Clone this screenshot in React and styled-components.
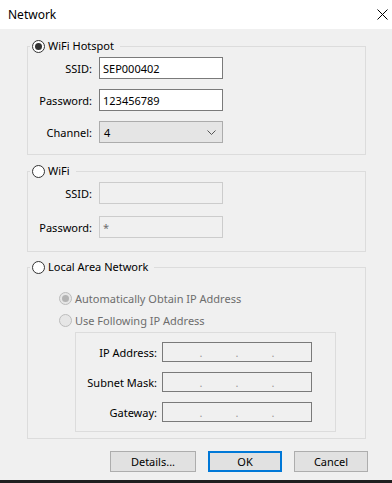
import styled, { createGlobalStyle } from "styled-components";

const GlobalStyle = createGlobalStyle`
  html, body {
    margin: 0;
    padding: 0;
    background: #f0f0f0;
  }
  body {
    font-family: "Noto Sans", "Liberation Sans", sans-serif;
    font-size: 11px;
    color: #000;
  }
`;

export default function App() {
  return (
    <Window>
      <GlobalStyle />
      <TitleBar>
        <span>Network</span>
        <svg width="11" height="11" viewBox="0 0 11 11">
          <path d="M0.5 0.5 L10.5 10.5 M10.5 0.5 L0.5 10.5" stroke="#000" strokeWidth="1" />
        </svg>
      </TitleBar>

      <Body>
        <Group $after={8}>
          <Legend>
            <Radio $checked />
            WiFi Hotspot
          </Legend>
          <Form $rowGap={10} $pad="3px 0 11px 8px">
            <Label>SSID:</Label>
            <TextBox readOnly value="SEP000402" />
            <Label>Password:</Label>
            <TextBox readOnly value="123456789" />
            <Label>Channel:</Label>
            <Combo>
              <span>4</span>
              <svg width="9" height="5" viewBox="0 0 9 5">
                <path d="M0.5 0.5 L4.5 4.5 L8.5 0.5" fill="none" stroke="#555" strokeWidth="1" />
              </svg>
            </Combo>
          </Form>
        </Group>

        <Group $after={7}>
          <Legend>
            <Radio />
            WiFi
          </Legend>
          <Form $rowGap={12} $pad="3px 0 13px 8px">
            <Label>SSID:</Label>
            <TextBox readOnly disabled value="" />
            <Label>Password:</Label>
            <TextBox readOnly disabled value="*" />
          </Form>
        </Group>

        <Group $after={12}>
          <Legend>
            <Radio />
            Local Area Network
          </Legend>
          <LanBody>
            <Option>
              <Radio $checked $disabled />
              Automatically Obtain IP Address
            </Option>
            <Option>
              <Radio $disabled />
              Use Following IP Address
            </Option>
            <IpBox>
              <Label>IP Address:</Label>
              <IpField />
              <Label>Subnet Mask:</Label>
              <IpField />
              <Label>Gateway:</Label>
              <IpField />
            </IpBox>
          </LanBody>
        </Group>

        <Buttons>
          <Button $w={86}>Details...</Button>
          <Button $w={74} $default>OK</Button>
          <Button $w={74}>Cancel</Button>
        </Buttons>
      </Body>
    </Window>
  );
}

function IpField() {
  return (
    <IpInput>
      <Octet />
      <Dot>.</Dot>
      <Octet />
      <Dot>.</Dot>
      <Octet />
      <Dot>.</Dot>
      <Octet />
    </IpInput>
  );
}

const Window = styled.div`
  width: 392px;
  height: 483px;
  box-sizing: border-box;
  display: flex;
  flex-direction: column;
  background: #f0f0f0;
  border-bottom: 3px solid #1f1f1f;
  overflow: hidden;
`;

const TitleBar = styled.div`
  height: 29px;
  flex-shrink: 0;
  background: #fff;
  display: flex;
  align-items: center;
  justify-content: space-between;
  padding: 0 4px 0 8px;
  box-sizing: border-box;
  font-size: 12px;
`;

const Body = styled.div`
  padding: 9px 26px 0 27px;
  display: flex;
  flex-direction: column;
`;

const Group = styled.fieldset`
  margin: 0 0 ${(p) => p.$after}px;
  padding: 0;
  min-width: 0;
  border: 1px solid #dcdcdc;
`;

const Legend = styled.legend`
  display: flex;
  align-items: center;
  height: 16px;
  line-height: 16px;
  margin-left: 2px;
  padding: 0 6px 0 2px;
`;

const Radio = styled.span`
  width: 13px;
  height: 13px;
  box-sizing: border-box;
  border-radius: 50%;
  border: 1px solid ${(p) => (p.$disabled ? "#bcbcbc" : "#333")};
  background: ${(p) => (p.$disabled ? "#e6e6e6" : "#fff")};
  margin-right: 3px;
  display: flex;
  align-items: center;
  justify-content: center;
  flex-shrink: 0;

  &::after {
    content: "";
    display: ${(p) => (p.$checked ? "block" : "none")};
    width: 7px;
    height: 7px;
    border-radius: 50%;
    background: ${(p) => (p.$disabled ? "#b4b4b4" : "#333")};
  }
`;

const Form = styled.div`
  display: grid;
  grid-template-columns: 56px 124px;
  column-gap: 7px;
  row-gap: ${(p) => p.$rowGap}px;
  align-items: center;
  padding: ${(p) => p.$pad};
`;

const Label = styled.span`
  text-align: right;
  white-space: nowrap;
`;

const TextBox = styled.input`
  height: 22px;
  box-sizing: border-box;
  margin: 0;
  padding: 0 3px;
  font: inherit;
  color: #000;
  background: #fff;
  border: 1px solid #7a7a7a;
  outline: none;

  &:disabled {
    background: #f0f0f0;
    border-color: #cccccc;
    color: #6d6d6d;
  }
`;

const Combo = styled.div`
  height: 22px;
  box-sizing: border-box;
  display: flex;
  align-items: center;
  justify-content: space-between;
  padding: 0 6px 0 4px;
  background: #e5e5e5;
  border: 1px solid #acacac;
`;

const LanBody = styled.div`
  display: flex;
  flex-direction: column;
  align-items: flex-start;
  padding: 15px 0 6px 31px;
`;

const Option = styled.div`
  display: flex;
  align-items: center;
  height: 16px;
  color: #6d6d6d;
  margin-bottom: 6px;
`;

const IpBox = styled.div`
  margin: -2px 0 0 16px;
  display: grid;
  grid-template-columns: 81px 150px;
  column-gap: 5px;
  row-gap: 10px;
  align-items: center;
  padding: 9px 23px 9px 0;
  border: 1px solid #dcdcdc;
`;

const IpInput = styled.div`
  height: 20px;
  box-sizing: border-box;
  display: flex;
  align-items: center;
  padding-left: 4px;
  background: #f0f0f0;
  border: 1px solid #7a7a7a;
`;

const Octet = styled.span`
  width: 32px;
`;

const Dot = styled.span`
  width: 4px;
  text-align: center;
  color: #9a9a9a;
  font-size: 11px;
`;

const Buttons = styled.div`
  display: flex;
  justify-content: flex-end;
  gap: 12px;
  margin-right: -2px;
`;

const Button = styled.button`
  width: ${(p) => p.$w}px;
  height: 21px;
  margin: 0;
  padding: 0;
  font: inherit;
  color: #000;
  background: #e1e1e1;
  border: ${(p) => (p.$default ? "2px solid #0078d7" : "1px solid #adadad")};
`;
